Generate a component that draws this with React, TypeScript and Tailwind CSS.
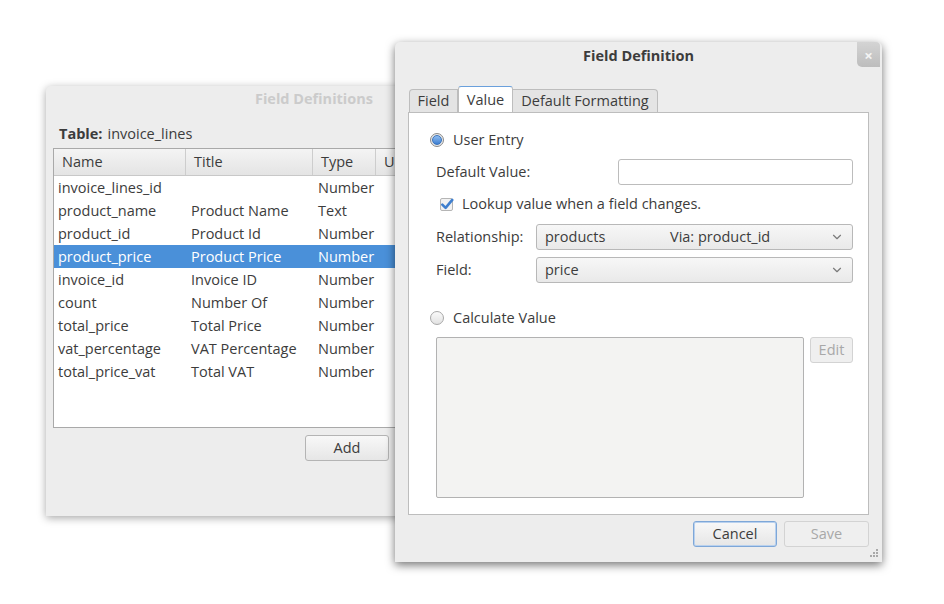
import { ChevronDown } from "lucide-react";

const rows = [
    { name: "invoice_lines_id", title: "", type: "Number" },
    { name: "product_name", title: "Product Name", type: "Text" },
    { name: "product_id", title: "Product Id", type: "Number" },
    { name: "product_price", title: "Product Price", type: "Number", selected: true },
    { name: "invoice_id", title: "Invoice ID", type: "Number" },
    { name: "count", title: "Number Of", type: "Number" },
    { name: "total_price", title: "Total Price", type: "Number" },
    { name: "vat_percentage", title: "VAT Percentage", type: "Number" },
    { name: "total_price_vat", title: "Total VAT", type: "Number" },
];

function Button({ label, disabled, focused, className = "" }: { label: string; disabled?: boolean; focused?: boolean; className?: string }) {
    return (
        <div
            className={`flex items-center justify-center rounded-[3px] border ${
                focused
                    ? "border-[#7ea7d8] shadow-[inset_0_0_0_1px_#b9d1ee]"
                    : disabled
                      ? "border-[#d3d3d3]"
                      : "border-[#b4b4b4]"
            } ${disabled ? "bg-[#efefef] text-[#a8a8a8]" : "bg-gradient-to-b from-[#f8f8f8] to-[#e6e6e6] text-[#3c3c3c]"} ${className}`}
        >
            {label}
        </div>
    );
}

function Radio({ checked }: { checked?: boolean }) {
    return checked ? (
        <span className="flex h-[14px] w-[14px] items-center justify-center rounded-full border border-[#8a8a8a] bg-[#e8e8e8]">
            <span className="h-[10px] w-[10px] rounded-full bg-gradient-to-b from-[#8fbdf0] to-[#3d7fd2] border border-[#3a73bb]" />
        </span>
    ) : (
        <span className="h-[14px] w-[14px] rounded-full border border-[#a8a8a8] bg-gradient-to-b from-[#fafafa] to-[#e2e2e2]" />
    );
}

function Combo({ children }: { children: React.ReactNode }) {
    return (
        <div className="flex h-[26px] w-[317px] items-center rounded-[3px] border border-[#b8b8b8] bg-gradient-to-b from-[#f7f7f7] to-[#e9e9e9] pl-[8px] pr-[8px]">
            <div className="flex flex-1 items-center">{children}</div>
            <ChevronDown className="h-[14px] w-[14px] text-[#7a7a7a]" strokeWidth={2} />
        </div>
    );
}

function BackWindow() {
    return (
        <div className="absolute left-[46px] top-[86px] flex h-[430px] w-[536px] flex-col rounded-t-[5px] bg-[#ededed] shadow-[0_2px_8px_rgba(0,0,0,0.35)]">
            <div className="flex h-[26px] items-center justify-center font-bold text-[#cbcbcb]">Field Definitions</div>
            <div className="mt-[12px] flex items-center pl-[13px]">
                <span className="font-bold">Table:</span>
                <span className="ml-[5px]">invoice_lines</span>
            </div>
            <div className="ml-[7px] mt-[4px] flex h-[280px] w-[522px] flex-col border border-[#a9a9a9] bg-white">
                <div className="flex h-[27px] border-b border-[#c8c8c8] bg-gradient-to-b from-[#f4f4f4] to-[#e4e4e4]">
                    <div className="flex w-[132px] items-center border-r border-[#cdcdcd] pl-[8px]">Name</div>
                    <div className="flex w-[127px] items-center border-r border-[#cdcdcd] pl-[8px]">Title</div>
                    <div className="flex w-[63px] items-center border-r border-[#cdcdcd] pl-[8px]">Type</div>
                    <div className="flex flex-1 items-center pl-[8px]">Unique</div>
                </div>
                {rows.map((r) => (
                    <div key={r.name} className={`flex h-[23px] items-center ${r.selected ? "bg-[#4a90d9] text-white" : ""}`}>
                        <div className="w-[132px] pl-[4px]">{r.name}</div>
                        <div className="w-[127px] pl-[5px]">{r.title}</div>
                        <div className="w-[63px] pl-[5px]">{r.type}</div>
                    </div>
                ))}
            </div>
            <div className="mt-[7px] flex gap-[6px] pl-[259px]">
                <Button label="Add" className="h-[26px] w-[84px]" />
                <Button label="Delete" className="h-[26px] w-[84px]" />
            </div>
        </div>
    );
}

function FrontWindow() {
    return (
        <div className="absolute left-[395px] top-[42px] flex h-[520px] w-[487px] flex-col rounded-t-[5px] bg-[#ededed] shadow-[0_3px_10px_rgba(0,0,0,0.55)]">
            <div className="flex h-[28px] items-center justify-center font-bold text-[#3c3c3c]">Field Definition</div>
            <div className="absolute right-[2px] top-0 flex h-[25px] w-[23px] items-center justify-center rounded-bl-[5px] rounded-tr-[4px] bg-gradient-to-b from-[#d4d4d4] to-[#bdbdbd] text-[15px] font-bold text-[#f4f4f4]">
                ×
            </div>

            {/* Tabs */}
            <div className="ml-[14px] mt-[16px] flex items-end">
                <div className="flex h-[23px] w-[49px] items-center justify-center rounded-tl-[4px] border border-b-0 border-[#bdbdbd] bg-[#e4e4e4]">Field</div>
                <div className="-mb-px flex h-[27px] w-[55px] items-center justify-center rounded-t-[3px] border border-b-0 border-[#bdbdbd] border-t-[#6aa0dc] bg-white">Value</div>
                <div className="flex h-[23px] w-[145px] items-center justify-center rounded-tr-[4px] border border-b-0 border-l-0 border-[#bdbdbd] bg-[#e4e4e4]">Default Formatting</div>
            </div>

            {/* Panel */}
            <div className="ml-[13px] flex h-[403px] w-[461px] flex-col border border-[#bdbdbd] bg-white pl-[21px] pr-[15px] pt-[18px]">
                <div className="flex h-[18px] items-center gap-[9px]">
                    <Radio checked />
                    <span>User Entry</span>
                </div>
                <div className="mt-[10px] flex items-center pl-[6px]">
                    <span className="w-[182px]">Default Value:</span>
                    <div className="h-[26px] flex-1 rounded-[3px] border border-[#bcbcbc] bg-white" />
                </div>
                <div className="mt-[11px] flex h-[16px] items-center gap-[9px] pl-[10px]">
                    <span className="relative h-[13px] w-[13px] rounded-[2px] border border-[#b5b5b5] bg-[#f2f2f2]">
                        <svg viewBox="0 0 12 12" className="absolute -left-[1px] -top-[2px] h-[14px] w-[14px]">
                            <path d="M2 6.5 L4.8 9.3 L10.5 2.5" fill="none" stroke="#3f7fce" strokeWidth="2.2" strokeLinecap="round" strokeLinejoin="round" />
                        </svg>
                    </span>
                    <span>Lookup value when a field changes.</span>
                </div>
                <div className="mt-[12px] flex items-center pl-[6px]">
                    <span className="w-[100px]">Relationship:</span>
                    <Combo>
                        <span className="w-[125px]">products</span>
                        <span>Via: product_id</span>
                    </Combo>
                </div>
                <div className="mt-[7px] flex items-center pl-[6px]">
                    <span className="w-[100px]">Field:</span>
                    <Combo>
                        <span>price</span>
                    </Combo>
                </div>
                <div className="mt-[26px] flex h-[18px] items-center gap-[9px]">
                    <Radio />
                    <span>Calculate Value</span>
                </div>
                <div className="mt-[10px] flex items-start gap-[6px] pl-[6px]">
                    <div className="h-[161px] w-[368px] rounded-[2px] border border-[#b2b2b2] bg-[#f3f3f2]" />
                    <Button label="Edit" disabled className="h-[26px] w-[43px]" />
                </div>
            </div>

            {/* Buttons */}
            <div className="mt-[6px] flex justify-end gap-[7px] pr-[13px]">
                <Button label="Cancel" focused className="h-[26px] w-[84px]" />
                <Button label="Save" disabled className="h-[26px] w-[85px]" />
            </div>
            <svg viewBox="0 0 10 10" className="absolute bottom-[4px] right-[3px] h-[10px] w-[10px]">
                {[
                    [8, 2],
                    [8, 5],
                    [5, 5],
                    [8, 8],
                    [5, 8],
                    [2, 8],
                ].map(([x, y]) => (
                    <rect key={`${x}-${y}`} x={x - 1} y={y - 1} width="2" height="2" fill="#a9a9a9" />
                ))}
            </svg>
        </div>
    );
}

export default function App() {
    return (
        <div className="relative h-[604px] w-[944px] overflow-hidden bg-white font-['Open_Sans',sans-serif] text-[14.5px] leading-[20px] text-[#3c3c3c]">
            <BackWindow />
            <FrontWindow />
        </div>
    );
}
